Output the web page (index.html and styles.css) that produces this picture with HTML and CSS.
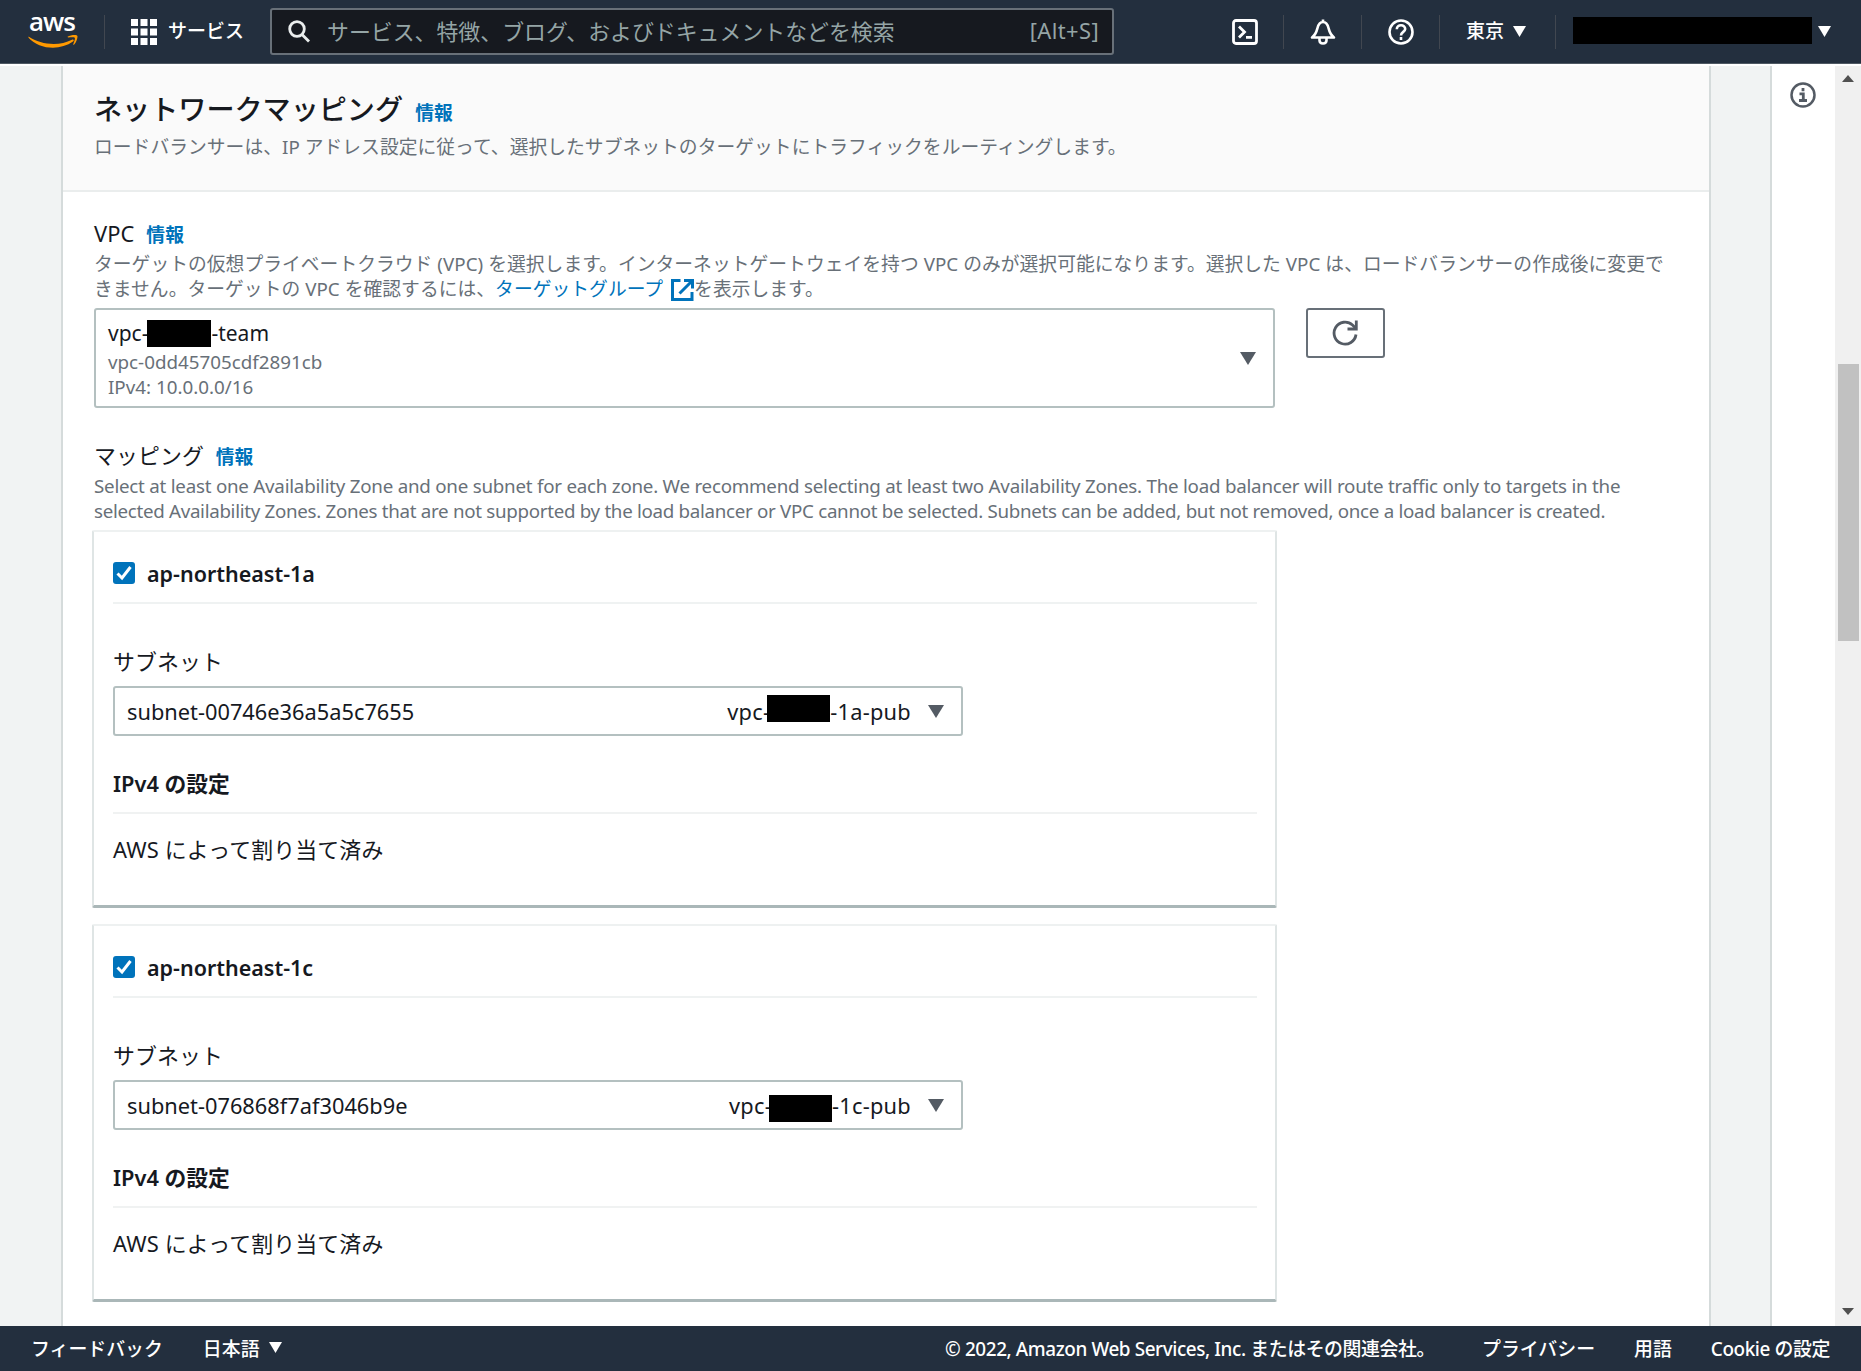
FILE: index.html
```
<!DOCTYPE html>
<html lang="ja">
<head>
    <meta charset="UTF-8">
    <meta name="viewport" content="width=device-width, initial-scale=1.0">
    <title>ロードバランサーの作成</title>
    <link rel="stylesheet" href="styles.css">
</head>
<body>
    <header class="topbar">
        <div class="logo">
            <span>aws</span>
            <svg width="50" height="14" viewBox="0 0 50 14"><path d="M0.5 1.5C13 10 31 11.500 44 4.800C45.500 4 46.500 5.500 45 6.600C32 16 11 14.500 0.500 2.700Z" fill="#f90"/><path d="M39.500 1.800C43 -0.300 49.500 -0.500 49.500 1.200C49.500 4 47.800 8.200 45.800 9.800C45.300 10 45 9.700 45.300 9C46.500 6.200 47.300 3.500 46.700 2.800C46 2 42.500 2.400 40 2.600Z" fill="#f90"/></svg>
        </div>
        <span class="divider"></span>
        <div class="services">
            <svg width="26" height="26" viewBox="0 0 26 26" fill="#fff"><path d="M0 0h7v7H0zM9.500 0h7v7h-7zM19 0h7v7h-7zM0 9.500h7v7H0zM9.500 9.500h7v7h-7zM19 9.500h7v7h-7zM0 19h7v7H0zM9.500 19h7v7h-7zM19 19h7v7h-7z"/></svg>
            <span class="bar-text">サービス</span>
        </div>
        <div class="search">
            <svg width="23" height="23" viewBox="0 0 23 23" fill="none" stroke="#eaeded" stroke-width="2.800"><circle cx="9" cy="9" r="7.300"/><path d="M14 14.500L21 21.500"/></svg>
            <span class="placeholder bar-text">サービス、特徴、ブログ、およびドキュメントなどを検索</span>
            <span class="shortcut bar-text">[Alt+S]</span>
        </div>
        <div class="tools">
            <div class="tool">
                <svg width="26" height="26" viewBox="0 0 26 26" fill="none" stroke="#fff" stroke-width="2.800"><rect x="1.500" y="1.500" width="23" height="23" rx="2.500"/><path d="M7 7.500L12.500 13L7 18.500M14 18.300h6"/></svg>
            </div>
            <div class="tool">
                <svg width="26" height="26" viewBox="0 0 26 26" fill="none" stroke="#fff" stroke-width="2.600" stroke-linejoin="round"><path d="M13 0.500v3M2 18.500h22C20 15.500 19.500 13 18.500 9C17.500 5 16 3 13 3C10 3 8.500 5 7.500 9C6.500 13 6 15.500 2 18.500Z"/><path d="M9.500 19v2.300c0 4.200 7 4.200 7 0V19"/></svg>
            </div>
            <div class="tool">
                <svg width="26" height="26" viewBox="0 0 26 26" fill="none" stroke="#fff" stroke-width="2.600"><circle cx="13" cy="13" r="11.500"/><path d="M8.800 10.300C8.800 5 17.200 5 17.200 10C17.200 13 13 12.800 13 16.500M13 18v3"/></svg>
            </div>
            <div class="region"><span class="bar-text">東京</span> <svg class="caret" width="13" height="11" viewBox="0 0 13 11"><path d="M0 0h13L6.500 11Z" fill="currentColor"/></svg></div>
            <div class="account"><span class="account-name"></span><svg class="caret" width="13" height="11" viewBox="0 0 13 11"><path d="M0 0h13L6.500 11Z" fill="currentColor"/></svg></div>
        </div>
    </header>

    <div class="page">
        <main class="panel">
            <div class="panel-header">
                <h2>ネットワークマッピング <a class="info">情報</a></h2>
                <p class="desc">ロードバランサーは、IP アドレス設定に従って、選択したサブネットのターゲットにトラフィックをルーティングします。</p>
            </div>
            <div class="panel-body">
                <div class="label">VPC <a class="info">情報</a></div>
                <p class="desc">ターゲットの仮想プライベートクラウド (VPC) を選択します。インターネットゲートウェイを持つ VPC のみが選択可能になります。選択した VPC は、ロードバランサーの作成後に変更で<br>きません。ターゲットの VPC を確認するには、<a class="link">ターゲットグループ <svg class="external" width="23" height="22" viewBox="0 0 23 22" fill="none" stroke="currentColor" stroke-width="3"><path d="M9.500 1.500H1.500V20.500H21V13M13 1.500h8.500V9.500M21 2L8.500 14.500"/></svg></a>を表示します。</p>
                <div class="vpc-row">
                    <div class="select vpc-select">
                        <div>
                            <p class="vpc-name">vpc-<span class="mask"></span>-team</p>
                            <p class="vpc-sub">vpc-0dd45705cdf2891cb</p>
                            <p class="vpc-sub">IPv4: 10.0.0.0/16</p>
                        </div>
                        <svg width="16" height="13" viewBox="0 0 16 13"><path d="M0 0h16L8 13Z" fill="currentColor"/></svg>
                    </div>
                    <button class="refresh">
                        <svg width="26" height="26" viewBox="0 0 26 26" fill="none" stroke="currentColor" stroke-width="2.800"><path d="M24 14.500A11 11 0 1 1 20.500 5L24 8.500"/><path d="M24.300 0.500V9H15.500"/></svg>
                    </button>
                </div>

                <div class="label mapping-label">マッピング <a class="info">情報</a></div>
                <p class="desc desc-en">Select at least one Availability Zone and one subnet for each zone. We recommend selecting at least two Availability Zones. The load balancer will route traffic only to targets in the<br><span class="tight">selected Availability Zones. Zones that are not supported by the load balancer or VPC cannot be selected. Subnets can be added, but not removed, once a load balancer is created.</span></p>

                <div class="zone">
                    <div class="zone-title">
                        <span class="checkbox"><svg width="22" height="22" viewBox="0 0 22 22" fill="none" stroke="#fff" stroke-width="3"><path d="M4.500 11.500L9 16L17.500 5"/></svg></span>
                        ap-northeast-1a
                    </div>
                    <div class="label">サブネット</div>
                    <div class="select subnet-select">
                        <span>subnet-00746e36a5a5c7655</span>
                        <span class="subnet-name">vpc-<span class="mask mask-high"></span>-1a-pub</span>
                        <svg width="16" height="13" viewBox="0 0 16 13"><path d="M0 0h16L8 13Z" fill="currentColor"/></svg>
                    </div>
                    <div class="ipv4">IPv4 の設定</div>
                    <p class="assigned">AWS によって割り当て済み</p>
                </div>

                <div class="zone">
                    <div class="zone-title">
                        <span class="checkbox"><svg width="22" height="22" viewBox="0 0 22 22" fill="none" stroke="#fff" stroke-width="3"><path d="M4.500 11.500L9 16L17.500 5"/></svg></span>
                        ap-northeast-1c
                    </div>
                    <div class="label">サブネット</div>
                    <div class="select subnet-select">
                        <span>subnet-076868f7af3046b9e</span>
                        <span class="subnet-name">vpc-<span class="mask mask-low"></span>-1c-pub</span>
                        <svg width="16" height="13" viewBox="0 0 16 13"><path d="M0 0h16L8 13Z" fill="currentColor"/></svg>
                    </div>
                    <div class="ipv4">IPv4 の設定</div>
                    <p class="assigned">AWS によって割り当て済み</p>
                </div>
            </div>
        </main>
        <aside class="help-panel">
            <svg width="26" height="26" viewBox="0 0 26 26" fill="none" stroke="#545b64" stroke-width="2.500"><circle cx="13" cy="13" r="11.500"/><path d="M13 6v3.200M9.500 11.800H13.300V18.500M9 18.500h8" stroke-width="2.800"/></svg>
        </aside>
        <div class="scrollbar">
            <svg width="12" height="7" viewBox="0 0 12 7"><path d="M0 7h12L6 0Z" fill="#505050"/></svg>
            <div class="thumb"></div>
            <svg class="down" width="12" height="7" viewBox="0 0 12 7"><path d="M0 0h12L6 7Z" fill="#505050"/></svg>
        </div>
    </div>

    <footer class="footer">
        <span class="feedback">フィードバック</span>
        <span class="language">日本語 <svg class="caret" width="13" height="11" viewBox="0 0 13 11"><path d="M0 0h13L6.500 11Z" fill="currentColor"/></svg></span>
        <span class="copyright">© 2022, Amazon Web Services, Inc. またはその関連会社。</span>
        <span class="privacy">プライバシー</span>
        <span class="terms">用語</span>
        <span class="cookie">Cookie の設定</span>
    </footer>
</body>
</html>
```
FILE: styles.css
```
*{
    padding: 0;
    margin: 0;
    box-sizing: border-box;
}
body{
    width: 1861px;
    height: 1371px;
    display: flex;
    flex-direction: column;
    overflow: hidden;
    background-color: #fff;
    color: #16191f;
    font-family: "Noto Sans", "Noto Sans CJK JP", sans-serif;
    font-size: 21.9px;
    white-space: nowrap;
}
svg{
    display: block;
    flex-shrink: 0;
}

/* top navigation */
.topbar{
    height: 64px;
    flex-shrink: 0;
    display: flex;
    align-items: center;
    background-color: #232f3e;
    border-bottom: 1px solid #4f5963;
    color: #fff;
    font-size: 19px;
}
.bar-text{
    padding-bottom: 3px;
}
.logo{
    width: 50px;
    margin-left: 28px;
}
.logo span{
    display: block;
    height: 20px;
    line-height: 13px;
    margin-left: -2px;
    text-align: center;
    font-family: "Open Sans", sans-serif;
    font-size: 26px;
    font-weight: 600;
    letter-spacing: -1px;
}
.divider{
    width: 1px;
    height: 34px;
    margin-left: 26px;
    background-color: #414750;
}
.services{
    display: flex;
    align-items: center;
    gap: 11px;
    margin-left: 26px;
    font-weight: 500;
    width: 139px;
}
.search{
    width: 844px;
    height: 47px;
    display: flex;
    align-items: center;
    padding: 0 13px 0 16px;
    background-color: #16191f;
    border: 2px solid #687078;
    border-radius: 3px;
    color: #95a5a6;
    font-size: 21.9px;
}
.placeholder{
    margin-left: 16px;
}
.shortcut{
    margin-left: auto;
    letter-spacing: 0.4px;
}
.tools{
    height: 34px;
    display: flex;
    margin-left: 92px;
}
.tools > div{
    display: flex;
    align-items: center;
}
.tool{
    width: 78px;
    padding-left: 26px;
    border-right: 1px solid #414750;
}
.region{
    width: 116px;
    padding-left: 26px;
    gap: 9px;
    border-right: 1px solid #414750;
    font-weight: 500;
}
.account{
    padding-left: 17px;
    gap: 6px;
}
.account-name{
    width: 239px;
    height: 27px;
    margin-bottom: 2px;
    background-color: #000;
}

/* page */
.page{
    flex: 1;
    min-height: 0;
    display: flex;
    padding-top: 2px;
    background: linear-gradient(#fff 2px, #f1f3f3 2px);
}
.panel{
    width: 1650px;
    margin-left: 61px;
    background-color: #fff;
    border-left: 2px solid #d5dbdb;
    border-right: 2px solid #d5dbdb;
}
.panel-header{
    height: 126px;
    padding: 22px 31px 0;
    background-color: #fafafa;
    border-bottom: 2px solid #eaeded;
}
.panel-header h2{
    height: 46px;
    line-height: 42px;
    font-size: 28.1px;
    font-weight: 500;
}
.info{
    margin-left: 6px;
    color: #0073bb;
    font-size: 18.75px;
    font-weight: 700;
}
.panel-header .info{
    margin-left: 5px;
}
.desc{
    color: #687078;
    font-size: 18.75px;
    line-height: 25px;
    letter-spacing: 0.05px;
}
.link{
    color: #0073bb;
}
.external{
    display: inline-block;
    margin-left: 3px;
    vertical-align: -5px;
}
.panel-body{
    padding: 26px 31px 0;
}
.label{
    height: 33px;
    line-height: 32px;
    letter-spacing: 0.1px;
}
.vpc-row{
    display: flex;
    align-items: flex-start;
    gap: 31px;
    margin-top: 7px;
}
.select{
    display: flex;
    align-items: center;
    border: 2px solid #b4c0c0;
    border-radius: 3px;
    color: #16191f;
}
.select svg{
    color: #545b64;
}
.vpc-select{
    width: 1181px;
    height: 100px;
    justify-content: space-between;
    padding: 0 17px 0 12px;
}
.vpc-name{
    height: 34px;
    line-height: 34px;
    font-size: 21px;
}
.vpc-sub{
    height: 25px;
    line-height: 25px;
    color: #687078;
    font-size: 18.8px;
}
/* redacted part of a name */
.mask{
    display: inline-block;
    width: 64px;
    height: 27px;
    margin: -8px 0 -8px -1px;
    vertical-align: 2px;
    background-color: #000;
}
.refresh{
    width: 79px;
    height: 50px;
    display: flex;
    align-items: center;
    justify-content: center;
    padding-right: 1px;
    background-color: #fff;
    border: 2px solid #687078;
    border-radius: 3px;
    color: #545b64;
}
.mapping-label{
    margin-top: 32px;
}
.desc-en{
    margin-bottom: 7px;
    letter-spacing: -0.235px;
}
.tight{
    letter-spacing: -0.303px;
}

/* availability zones */
.zone{
    width: 1185px;
    height: 378px;
    margin: 0 0 16px -2px;
    padding: 0 18px 0 19px;
    border: 2px solid #dfe5e5;
    border-top-color: #eef1f1;
    border-bottom: 3px solid #aab7b8;
    border-radius: 2px;
}
.zone-title{
    height: 72px;
    display: flex;
    align-items: center;
    gap: 12px;
    padding-top: 12px;
    border-bottom: 2px solid #eff2f2;
    font-size: 21.5px;
    font-weight: 600;
}
.checkbox{
    background-color: #0073bb;
    border-radius: 3px;
}
.zone .label{
    margin-top: 42px;
    height: 40px;
}
.subnet-select{
    width: 850px;
    height: 50px;
    padding: 0 17px 0 12px;
    font-size: 21.8px;
}
.subnet-name{
    margin-left: auto;
    margin-right: 17px;
    letter-spacing: 0.25px;
}
.subnet-name .mask{
    width: 63px;
    margin-left: -3px;
}
.subnet-name .mask-high{
    vertical-align: 6px;
}
.subnet-name .mask-low{
    vertical-align: 0;
}
.ipv4{
    height: 78px;
    padding-top: 33px;
    line-height: 30px;
    border-bottom: 2px solid #f0f2f2;
    font-size: 21.8px;
    font-weight: 600;
}
.assigned{
    padding-top: 20px;
    line-height: 32px;
    letter-spacing: 0.15px;
}

/* help panel and scrollbar */
.help-panel{
    width: 65px;
    margin-left: 59px;
    padding: 16px 0 0 18px;
    background-color: #fff;
    border-left: 2px solid #d5dbdb;
}
.scrollbar{
    flex: 1;
    display: flex;
    flex-direction: column;
    align-items: center;
    padding: 9px 0 11px;
    background-color: #f0f0f0;
}
.thumb{
    width: 21px;
    height: 277px;
    margin-top: 282px;
    background-color: #c1c1c1;
}
.scrollbar .down{
    margin-top: auto;
}

/* footer */
.footer{
    height: 45px;
    flex-shrink: 0;
    display: flex;
    align-items: center;
    padding: 0 31px 2px;
    background-color: #232f3e;
    color: #fff;
    font-size: 18.9px;
    font-weight: 500;
}
.language{
    display: flex;
    align-items: center;
    gap: 9px;
    margin-left: 40px;
}
.copyright{
    margin-left: auto;
    letter-spacing: -0.4px;
}
.privacy{
    margin-left: 47px;
}
.terms{
    margin-left: 39px;
}
.cookie{
    margin-left: 39px;
    letter-spacing: -0.4px;
}
```
